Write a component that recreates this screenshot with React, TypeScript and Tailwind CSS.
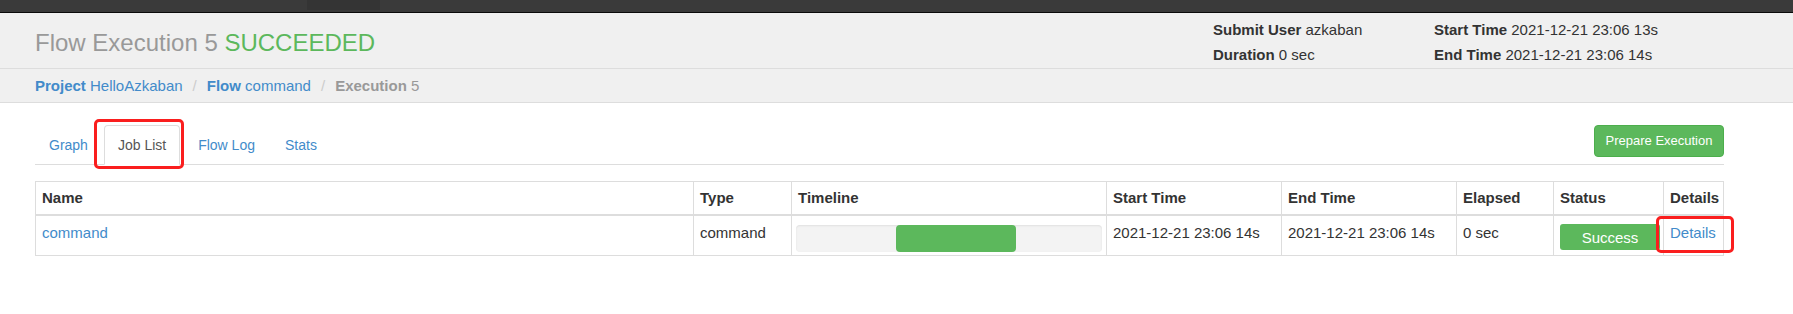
export default function App() {
  return (
    <div className="relative min-h-[314px] w-full bg-white font-['Liberation_Sans',Arial,sans-serif] text-[#333]">
      {/* top nav strip */}
      <div className="h-[13px] border-b border-[#0a0a0a] bg-[#3a3a3a]">
        <div className="ml-[307px] h-[10px] w-[73px] bg-[#343434]" />
      </div>

      {/* page header */}
      <div className="flex h-[56px] border-b border-[#dddddd] bg-[#f0f0f0] pl-[35px] pr-[69px]">
        <h1 className="flex-1 pt-[15px] text-[24px] font-normal leading-[30px] text-[#999]">
          Flow Execution 5 <span className="text-[#5cb85c]">SUCCEEDED</span>
        </h1>
        <div className="grid w-[511px] grid-cols-[221px_1fr] pt-[6px] text-[15px] leading-[22px] text-[#333]">
          <div>
            <b>Submit User</b> azkaban
          </div>
          <div>
            <b>Start Time</b> 2021-12-21 23:06 13s
          </div>
          <div>
            <b>Duration</b> 0 sec
          </div>
          <div>
            <b>End Time</b> 2021-12-21 23:06 14s
          </div>
        </div>
      </div>

      {/* breadcrumb */}
      <div className="flex h-[34px] items-center border-b border-[#dddddd] bg-[#f0f0f0] px-[35px] text-[15px] leading-[21px]">
        <a className="text-[#428bca]">
          <b>Project</b> HelloAzkaban
        </a>
        <span className="px-[10px] text-[#ccc]">/</span>
        <a className="text-[#428bca]">
          <b>Flow</b> command
        </a>
        <span className="px-[10px] text-[#ccc]">/</span>
        <span className="text-[#999]">
          <b>Execution</b> 5
        </span>
      </div>

      <div className="pl-[35px] pr-[69px]">
        {/* tabs */}
        <div className="mt-[22px] flex items-start border-b border-[#dddddd]">
          <ul className="-mb-px flex text-[14px] leading-[20px]">
            <li className="mr-[2px] rounded-t-[4px] border border-transparent px-[13px] py-[9px] text-[#428bca]">
              Graph
            </li>
            <li className="mr-[4px] rounded-t-[4px] border border-[#dddddd] border-b-transparent bg-white px-[13px] py-[9px] text-[#555]">
              Job List
            </li>
            <li className="mr-[2px] rounded-t-[4px] border border-transparent px-[13px] py-[9px] text-[#428bca]">
              Flow Log
            </li>
            <li className="mr-[2px] rounded-t-[4px] border border-transparent px-[13px] py-[9px] text-[#428bca]">
              Stats
            </li>
          </ul>
          <button className="ml-auto h-[32px] w-[130px] rounded-[4px] border border-[#4cae4c] bg-[#5cb85c] text-[13px] text-white">
            Prepare Execution
          </button>
        </div>

        {/* job list table */}
        <div className="mt-[16px] border border-[#dddddd] text-[15px] leading-[21px]">
          <div className="grid h-[34px] grid-cols-[657px_98px_315px_175px_175px_97px_110px_60px] border-b-2 border-[#dddddd] font-bold">
            <div className="px-[6px] pt-[5px]">Name</div>
            <div className="border-l border-[#dddddd] px-[6px] pt-[5px]">Type</div>
            <div className="border-l border-[#dddddd] px-[6px] pt-[5px]">Timeline</div>
            <div className="border-l border-[#dddddd] px-[6px] pt-[5px]">Start Time</div>
            <div className="border-l border-[#dddddd] px-[6px] pt-[5px]">End Time</div>
            <div className="border-l border-[#dddddd] px-[6px] pt-[5px]">Elapsed</div>
            <div className="border-l border-[#dddddd] px-[6px] pt-[5px]">Status</div>
            <div className="border-l border-[#dddddd] px-[6px] pt-[5px]">Details</div>
          </div>
          <div className="grid h-[39px] grid-cols-[657px_98px_315px_175px_175px_97px_110px_60px]">
            <div className="px-[6px] pt-[6px] text-[#428bca]">command</div>
            <div className="border-l border-[#dddddd] px-[6px] pt-[6px]">command</div>
            <div className="border-l border-[#dddddd] px-[4px] pt-[9px]">
              <div className="flex h-[27px] rounded-[4px] bg-[#f3f3f3] shadow-[inset_0_1px_2px_rgba(0,0,0,0.08)]">
                <div className="ml-[100px] h-full w-[120px] rounded-[4px] bg-[#5cb85c]" />
              </div>
            </div>
            <div className="border-l border-[#dddddd] px-[6px] pt-[6px]">2021-12-21 23:06 14s</div>
            <div className="border-l border-[#dddddd] px-[6px] pt-[6px]">2021-12-21 23:06 14s</div>
            <div className="border-l border-[#dddddd] px-[6px] pt-[6px]">0 sec</div>
            <div className="border-l border-[#dddddd] pl-[6px] pt-[8px]">
              <div className="flex h-[26px] w-[100px] items-center justify-center rounded-[3px] bg-[#5cb85c] text-white">
                Success
              </div>
            </div>
            <div className="border-l border-[#dddddd] px-[6px] pt-[6px] text-[#428bca]">Details</div>
          </div>
        </div>
      </div>

      {/* red annotation boxes */}
      <div className="absolute left-[94px] top-[119px] h-[50px] w-[90px] rounded-[5px] border-[3px] border-[#fa1e1e]" />
      <div className="absolute left-[1656px] top-[216px] h-[37px] w-[78px] rounded-[5px] border-[3px] border-[#fa1e1e]" />
    </div>
  );
}
